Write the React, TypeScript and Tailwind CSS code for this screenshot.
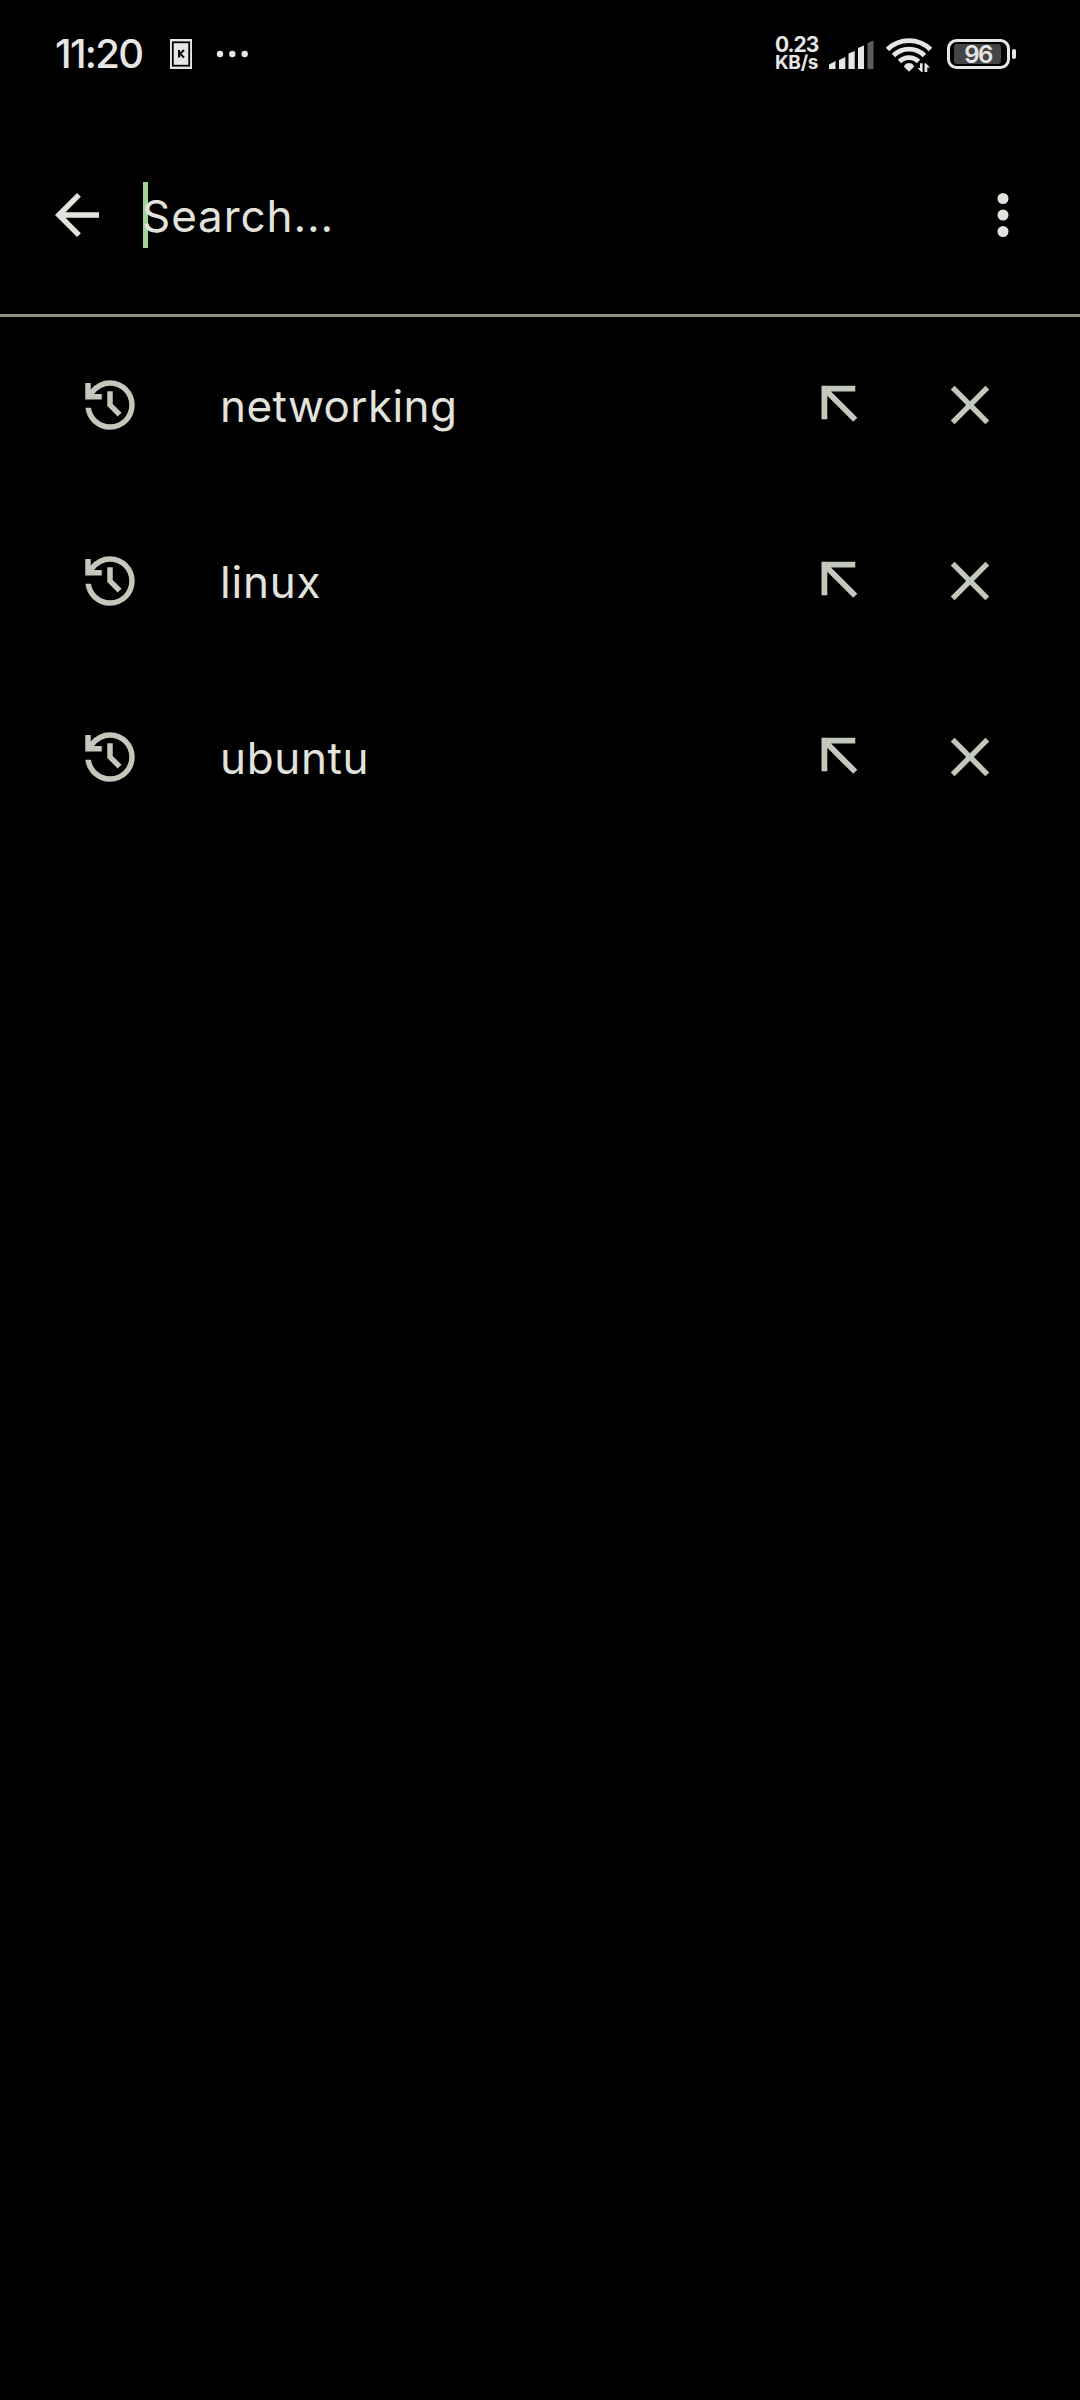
import type { ReactNode } from "react";

const queries = ["networking", "linux", "ubuntu"];
const spacing = ["tracking-[0.4px]", "tracking-[0.8px]", "tracking-[0.65px]"];

function Icon({ children }: { children: ReactNode }) {
  return (
    <svg className="size-[66px] shrink-0" viewBox="0 -960 960 960" fill="currentColor">
      {children}
    </svg>
  );
}

function StatusBar() {
  return (
    <div className="flex h-[108px] items-center text-[#e6e6e6]">
      <span className="ml-[55px] w-[115px] text-[40px] font-medium leading-none tracking-[-1.7px]">11:20</span>
      <svg className="h-[30px] w-[22px]" viewBox="0 0 22 30">
        <rect width="22" height="30" fill="#e6e6e6" />
        <rect x="2.8" y="3.3" width="16.4" height="23.4" fill="none" stroke="#000" strokeWidth="1.8" />
        <path d="M9 11v7.500M14 11l-4 3.800 4 3.700" stroke="#000" strokeWidth="2" fill="none" />
      </svg>
      <svg className="ml-[24px] h-[8px] w-[34px]" viewBox="0 0 34 8" fill="currentColor">
        <circle cx="4" cy="4" r="3.2" />
        <circle cx="16.300" cy="4" r="3.2" />
        <circle cx="28.700" cy="4" r="3.2" />
      </svg>
      <div className="ml-[525px] flex w-[54px] flex-col whitespace-nowrap font-bold">
        <span className="text-[21px] leading-[18px] tracking-[-1px]">0.23</span>
        <span className="text-[19px] leading-[18px] tracking-[-0.3px]">KB/s</span>
      </div>
      <svg className="h-[40px] w-[190px]" viewBox="829 34 190 40" fill="currentColor">
        <path d="M829 69v-4.500l6.500-3.500v8zM839 69V60l6.300-3v12zM848.500 69V53.500l6.200-2.500v18zM858 69V48l6-2.500v23.500z" />
        <path d="M867.500 69V43l6-2.500v28.500z" fill="#5c5c5c" />
        <g fill="none" stroke="currentColor" strokeWidth="4.900">
          <path d="M887.500 49.500a30.500 30.500 0 0 1 43 0" />
          <path d="M893.500 55.500a22 22 0 0 1 31 0" />
          <path d="M899.500 61.500a13.500 13.500 0 0 1 19 0" />
        </g>
        <path d="M904.500 67q0-3.500 4.500-3.500t4.500 3.500l-4.500 4.300z" stroke="currentColor" strokeWidth="0.800" />
        <path d="M920 63.300h2.600v8.700h-1.200l-3.900-4h2.500zM924.500 72v-8.700h1.400l4.100 4.200h-2.700V72z" />
        <rect x="948.500" y="40.500" width="60" height="27" rx="8" fill="none" stroke="currentColor" strokeWidth="3" />
        <rect x="954" y="44" width="47" height="20" rx="3" fill="#454545" />
        <rect x="1012" y="49" width="4" height="10" rx="2" />
        <text x="978" y="62.800" textAnchor="middle" fontSize="24" fontWeight="600" letterSpacing="-1.5">96</text>
      </svg>
    </div>
  );
}

function Row({ query, tracking }: { query: string; tracking: string }) {
  return (
    <li className="flex h-[176px] items-center px-[77px] text-[#c3c8bc]">
      <Icon>
        <path d="M480-120q-138 0-240.500-91.500T122-440h82q14 104 92.500 172T480-200q117 0 198.500-81.500T760-480q0-117-81.500-198.500T480-760q-69 0-129 32t-101 88h110v80H120v-240h80v94q51-64 124.500-99T480-840q75 0 140.500 28.500t114 77q48.500 48.500 77 114T840-480q0 75-28.500 140.500t-77 114q-48.500 48.500-114 77T480-120Zm112-192L440-464v-216h80v184l128 128-56 56Z" />
      </Icon>
      <span className={`ml-[77px] mt-[2px] flex-1 text-[44px] font-[370] text-[#e2e3dc] ${tracking}`}>{query}</span>
      <svg className="size-[66px] shrink-0" viewBox="0 0 66 66" fill="none" stroke="currentColor" strokeWidth="5.800">
        <path d="M50.300 16.700H19.400V47.300M19.500 17L50.300 47.800" />
      </svg>
      <span className="ml-[66px] flex">
        <Icon>
          <path d="m256-200-56-56 224-224-224-224 56-56 224 224 224-224 56 56-224 224 224 224-56 56-224-224-224 224Z" />
        </Icon>
      </span>
    </li>
  );
}

export default function App() {
  return (
    <div className="min-h-[2400px] w-[1080px] bg-black font-['Inter',sans-serif]">
      <StatusBar />
      <header className="h-[209px] border-b-[3px] border-[#8d9387] pt-[74px] text-[#e2e3dc]">
        <div className="flex items-center">
          <span className="ml-[44px] flex">
            <Icon>
              <path d="m313-440 224 224-57 56-320-320 320-320 57 56-224 224h487v80H313Z" />
            </Icon>
          </span>
          <div className="ml-[33px] flex h-[66px] flex-1 items-center">
            <span className="h-[66px] w-[5px] shrink-0 bg-[#a5d395]" />
            <span className="relative -ml-[6px] mt-[2px] text-[44px] font-[370] tracking-[0.9px]">Search...</span>
          </div>
          <span className="mr-[44px] flex">
            <Icon>
              <circle cx="480" cy="-720" r="52" />
              <circle cx="480" cy="-480" r="52" />
              <circle cx="480" cy="-240" r="52" />
              <circle cx="480" cy="-720" r="80" />
              <circle cx="480" cy="-480" r="80" />
              <circle cx="480" cy="-240" r="80" />
            </Icon>
          </span>
        </div>
      </header>
      <ul>
        {queries.map((query, i) => (
          <Row key={query} query={query} tracking={spacing[i]} />
        ))}
      </ul>
    </div>
  );
}
